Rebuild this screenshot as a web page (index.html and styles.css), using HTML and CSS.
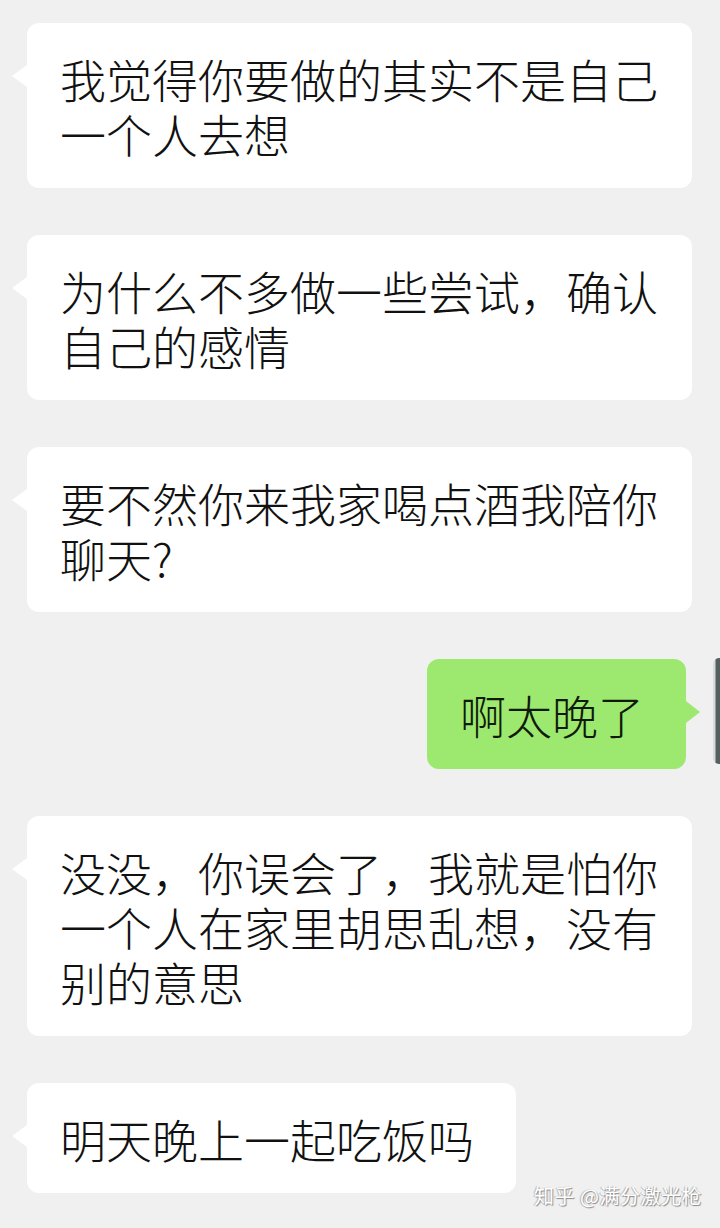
FILE: index.html
```html
<!DOCTYPE html>
<html lang="zh-CN">
<head>
<meta charset="utf-8">
<title>聊天</title>
<link rel="stylesheet" href="styles.css">
</head>
<body>
<div class="page">
  <div class="chat">
    <div class="row left">
      <div class="bubble">我觉得你要做的其实不是自己<br>一个人去想</div>
    </div>
    <div class="row left">
      <div class="bubble">为什么不多做一些尝试，确认<br>自己的感情</div>
    </div>
    <div class="row left">
      <div class="bubble">要不然你来我家喝点酒我陪你<br>聊天?</div>
    </div>
    <div class="row right">
      <div class="bubble mine short">啊太晚了</div>
      <div class="avatar"></div>
    </div>
    <div class="row left">
      <div class="bubble">没没，你误会了，我就是怕你<br>一个人在家里胡思乱想，没有<br>别的意思</div>
    </div>
    <div class="row left">
      <div class="bubble short">明天晚上一起吃饭吗</div>
    </div>
  </div>
  <div class="watermark">知乎 @满分激光枪</div>
</div>
</body>
</html>
```
FILE: styles.css
```css
html, body {
  margin: 0;
  padding: 0;
  background: #f0f0f0;
}
.page {
  position: relative;
  width: 720px;
  height: 1228px;
  overflow: hidden;
  background: #f0f0f0;
  font-family: "Noto Sans CJK SC", "Noto Sans", sans-serif;
}
.chat {
  display: flex;
  flex-direction: column;
  gap: 47px;
  padding-top: 23px;
}
.row {
  display: flex;
  align-items: flex-start;
}
.row.left {
  padding-left: 27px;
}
.row.right {
  justify-content: flex-end;
  gap: 27px;
}
.bubble {
  position: relative;
  background: #ffffff;
  border-radius: 12px;
  padding: 28px 34px 27px 33px;
  font-size: 46px;
  font-weight: 300;
  line-height: 55px;
  color: #111111;
  white-space: nowrap;
}
.bubble.short {
  padding-right: 42px;
}
.bubble::before {
  content: "";
  position: absolute;
  top: 42px;
  left: -15px;
  width: 0;
  height: 0;
  border-top: 11px solid transparent;
  border-bottom: 11px solid transparent;
  border-right: 15px solid #ffffff;
}
.bubble.mine {
  background: #9de86e;
  color: #0f1a0b;
}
.bubble.mine::before {
  left: auto;
  right: -14px;
  border-right: 0;
  border-left: 14px solid #9de86e;
}
.avatar {
  width: 106px;
  height: 106px;
  margin-right: -99px;
  margin-top: -1px;
  border-radius: 6px;
  background: linear-gradient(90deg, #d9dcdc 0, #d9dcdc 2px, #556060 3px, #3f4a48 100%);
}
.watermark {
  position: absolute;
  right: 18px;
  bottom: 20px;
  font-size: 20px;
  line-height: 24px;
  color: #ffffff;
  text-shadow: 1px 1px 1px #8a8a8a, -1px 0 1px #b0b0b0;
  letter-spacing: 0.5px;
}
```
